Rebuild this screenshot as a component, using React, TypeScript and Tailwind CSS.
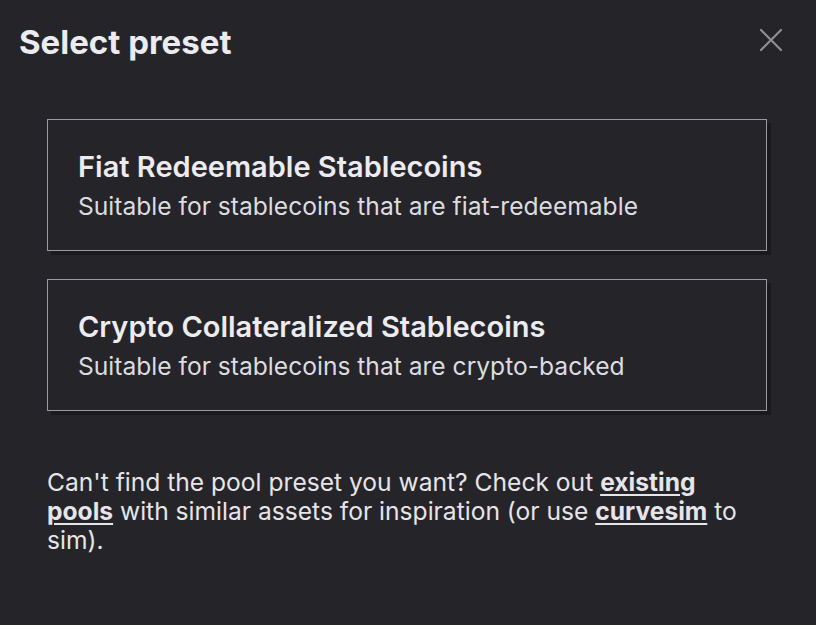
import React from "react";

const presets = [
  {
    title: "Fiat Redeemable Stablecoins",
    desc: "Suitable for stablecoins that are fiat-redeemable",
  },
  {
    title: "Crypto Collateralized Stablecoins",
    desc: "Suitable for stablecoins that are crypto-backed",
  },
];

export default function App() {
  return (
    <div className="w-[816px] h-[625px] bg-[#252429] text-[#ebebf0] font-['Inter',sans-serif] overflow-hidden">
      {/* header */}
      <div className="flex items-center justify-between pl-[19px] pr-[33px] pt-[22px]">
        <h1 className="text-[33px] leading-[40px] font-bold">Select preset</h1>
        <button className="text-[#8e8e93] -mt-[4px]" aria-label="Close">
          <svg width="24" height="24" viewBox="0 0 24 24" fill="none" stroke="currentColor" strokeWidth="2.2" strokeLinecap="round">
            <path d="M2 2L22 22M22 2L2 22" />
          </svg>
        </button>
      </div>

      {/* presets */}
      <div className="flex flex-col gap-[28px] px-[47px] mt-[57px]">
        {presets.map((p) => (
          <div
            key={p.title}
            role="button"
            className="cursor-pointer w-[720px] h-[132px] border border-[#9a9aa2] bg-[#252429] shadow-[4px_4px_0_0_#1a1a1d] pl-[30px] pt-[30px]"
          >
            <div className="text-[29px] leading-[34px] font-semibold">{p.title}</div>
            <div className="text-[24.6px] leading-[30px] mt-[7px] text-[#dcdce0]">{p.desc}</div>
          </div>
        ))}
      </div>

      {/* footer */}
      <p className="pl-[47px] pr-[62px] mt-[57px] w-[816px] text-[24.6px] leading-[29px] text-[#e5e5ea]">
        Can't find the pool preset you want? Check out{" "}
        <a className="font-bold underline underline-offset-[3px] decoration-2">existing pools</a> with similar
        assets for inspiration (or use{" "}
        <a className="font-bold underline underline-offset-[3px] decoration-2">curvesim</a> to sim).
      </p>
    </div>
  );
}
